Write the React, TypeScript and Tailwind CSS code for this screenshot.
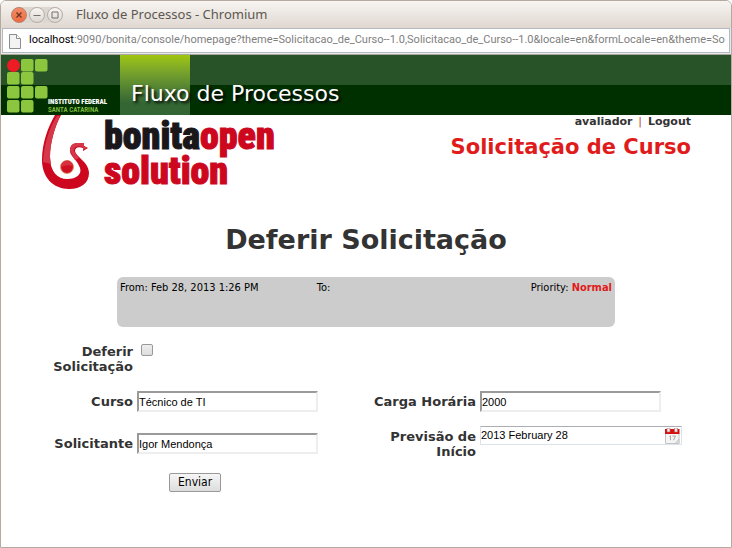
import { useState } from "react";
import type { ReactNode } from "react";

const URL_HOST = "localhost";
const URL_REST =
  ":9090/bonita/console/homepage?theme=Solicitacao_de_Curso--1.0,Solicitacao_de_Curso--1.0&locale=en&formLocale=en&theme=So";

function WindowButton({ label, close, children }: { label: string; close?: boolean; children: ReactNode }) {
  return (
    <button
      type="button"
      aria-label={label}
      className={
        close
          ? "h-4 w-4 rounded-full border border-[#b9806a] bg-gradient-to-b from-[#f58a66] to-[#ed6b40] text-[#6b3524]"
          : "h-4 w-4 rounded-full border border-[#b5aea6] bg-gradient-to-b from-[#f8f6f4] to-[#dcd7d1] text-[#77706a]"
      }
    >
      <svg viewBox="0 0 14 14" className="h-full w-full" fill="none" stroke="currentColor">
        {children}
      </svg>
    </button>
  );
}

function TitleBar() {
  return (
    <div className="flex h-[27px] items-center bg-gradient-to-b from-[#f7f5f2] to-[#e0d7d0] pl-[10px]">
      <div className="flex gap-[2px] rounded-full bg-[#ddd7d1]">
        <WindowButton label="Close" close>
          <path d="M4.5 4.5l5 5M9.5 4.5l-5 5" strokeWidth="1.3" />
        </WindowButton>
        <WindowButton label="Minimize">
          <path d="M3.5 7.5h7" />
        </WindowButton>
        <WindowButton label="Maximize">
          <path d="M4 4h6v6h-6z" />
        </WindowButton>
      </div>
      <h1 className="ml-[13px] text-[13px] text-[#5c5752]">Fluxo de Processos - Chromium</h1>
    </div>
  );
}

function AddressBar() {
  return (
    <div className="border-b border-[#a9a59f] bg-[#e9e9ea] px-px pb-px">
      <div className="flex h-[25px] items-center overflow-hidden border border-[#b4b8c2] bg-white pl-[6px] font-[Roboto,'Noto_Sans',sans-serif] text-[11px] whitespace-nowrap">
        <svg viewBox="0 0 12 16" className="mr-[8px] h-4 w-3 shrink-0">
          <path d="M.5 1.5h7l4 4v10H.5z" fill="#f3f3f3" stroke="#8c8c8c" />
          <path d="M7.5 1.5v4h4" fill="#fff" stroke="#8c8c8c" />
        </svg>
        <span className="text-black">{URL_HOST}</span>
        <span className="text-[#808080]">{URL_REST}</span>
      </div>
    </div>
  );
}

function InstituteLogo() {
  const tiles = [
    [14, 0],
    [28, 0],
    [0, 13],
    [14, 13],
    [0, 27],
    [14, 27],
    [28, 27],
    [0, 41],
    [14, 41],
  ];
  return (
    <svg viewBox="0 0 41 54" className="h-[54px] w-[41px] shrink-0">
      <circle cx="6.5" cy="6.5" r="6.5" fill="#ed1c24" />
      {tiles.map(([x, y]) => (
        <rect key={`${x}-${y}`} x={x} y={y} width="12.5" height="12.5" rx="2" fill="#8cc63f" />
      ))}
    </svg>
  );
}

function SiteHeader() {
  return (
    <header className="flex h-[60px] bg-[linear-gradient(#285228_50%,#003000_50%)]">
      <div className="flex w-[119px] shrink-0 pt-1 pl-[6px]">
        <InstituteLogo />
        <p className="mt-[39px] font-['Roboto_Condensed','Liberation_Sans',sans-serif] text-[7px] leading-[8px] font-black whitespace-nowrap text-white">
          INSTITUTO FEDERAL
          <br />
          <span className="font-medium text-[#8cc63f]">SANTA CATARINA</span>
        </p>
      </div>
      <div className="w-[70px] bg-gradient-to-b from-[#9fc60c] to-[#336633] to-80% pt-[25px] pl-[11px]">
        <h2 className="text-[22px] leading-[27px] whitespace-nowrap text-white [text-shadow:2px_2px_3px_#000]">
          Fluxo de Processos
        </h2>
      </div>
    </header>
  );
}

function BonitaLogo() {
  return (
    <div className="flex">
      <svg viewBox="0 0 50 75" className="h-[75px] w-[50px]">
        <path
          d="M14 0H20C14 11 9 28 9 42C9 57 17 64 26 64C36 64 41 59 39 53C37 46 29 41 29 36C29 30 32 28 37 28L43 28L43 31L47 33L42 36L42 33C37 31 34 33 34 36C35 42 48 47 48 58C48 68 40 74 28 74C12 74 1 62 1 45C1 28 7 12 14 0Z"
          fill="#cc071e"
        />
        <path
          d="M9 42C9 28 14 11 19 1H16C8 13 3 30 2 47L10 49ZM29 36C29 30 32 28 37 28L43 28L43 31L46 33L42 35L42 32C36 30 32 33 33 36L38 43L34 45Z"
          fill="#d6384a"
        />
        <circle cx="26" cy="52" r="6.5" fill="#cf1022" stroke="#e39a70" />
        <path d="M20 52a6 6 0 0 1 12-1q-6-2-12 1z" fill="#d93040" />
      </svg>
      <p className="ml-[13px] pt-[4px] font-['Roboto_Condensed','Liberation_Sans',sans-serif] text-[38px] leading-[35px] font-black text-[#cc071e] [-webkit-text-stroke:1px_currentColor]">
        <span className="text-[#1a171b]">bonita</span>open
        <br />
        solution
      </p>
    </div>
  );
}

function Field({ id, label, children }: { id: string; label: string; children: ReactNode }) {
  return (
    <div className="flex items-start gap-1">
      <label htmlFor={id} className="pt-[3px] text-right text-[13px] leading-[15px] font-bold text-[#333]">
        {label}
      </label>
      {children}
    </div>
  );
}

const fieldClass =
  "h-[21px] w-[181px] border-2 border-t-[#9a9a9a] border-l-[#9a9a9a] border-r-[#eee] border-b-[#eee] bg-white font-['Liberation_Sans',Arial,sans-serif] text-[11px] text-black";

function CalendarIcon() {
  return (
    <svg viewBox="0 0 15 16" className="h-4 w-[15px]">
      <path d="M.5 5h13.5v10.5H.5z" fill="#f4f4f4" stroke="#c5c5c5" />
      <path d="M0 1h14.5v5H0z" fill="#d80f0f" />
      <path d="M2 0h3v4H2zM9.5 0h3v4h-3z" fill="#eee" stroke="#a66" strokeWidth=".6" />
      <path d="M4.5 8.5l1-.8v4.5M7.500 8h3l-2 4.2" fill="none" stroke="#aaa" />
      <path d="M14 11l-4 4.5h4z" fill="#ddd" stroke="#bbb" strokeWidth=".6" />
    </svg>
  );
}

function RequestForm() {
  const [approved, setApproved] = useState(false);
  const [course, setCourse] = useState("Técnico de TI");
  const [hours, setHours] = useState("2000");
  const [applicant, setApplicant] = useState("Igor Mendonça");
  const [start, setStart] = useState("2013 February 28");

  return (
    <form className="mt-[14px]" onSubmit={(e) => e.preventDefault()}>
      <div className="grid grid-cols-2">
        <div className="flex flex-col [&_label]:w-[92px]">
          <div className="h-[50px]">
            <Field id="approved" label="Deferir Solicitação">
              <input
                id="approved"
                type="checkbox"
                checked={approved}
                onChange={(e) => setApproved(e.target.checked)}
                className="mt-[3px] ml-1 h-3 w-3 appearance-none rounded-xs border border-[#999] bg-gradient-to-b from-[#eee] to-[#ddd] checked:bg-[#666]"
              />
            </Field>
          </div>
          <div className="h-[42px]">
            <Field id="course" label="Curso">
              <input id="course" value={course} onChange={(e) => setCourse(e.target.value)} className={fieldClass} />
            </Field>
          </div>
          <Field id="applicant" label="Solicitante">
            <input id="applicant" value={applicant} onChange={(e) => setApplicant(e.target.value)} className={fieldClass} />
          </Field>
        </div>
        <div className="flex flex-col pt-[50px] [&_label]:w-[110px]">
          <div className="h-[35px]">
            <Field id="hours" label="Carga Horária">
              <input id="hours" value={hours} onChange={(e) => setHours(e.target.value)} className={fieldClass} />
            </Field>
          </div>
          <Field id="start" label="Previsão de Início">
            <div className="flex h-[19px] w-[202px] items-center border border-[#dde3ec] border-t-[#abadb3] pr-px">
              <input
                id="start"
                value={start}
                onChange={(e) => setStart(e.target.value)}
                className="min-w-0 flex-1 font-['Liberation_Sans',Arial,sans-serif] text-[11px] text-black"
              />
              <button type="button" aria-label="Calendar">
                <CalendarIcon />
              </button>
            </div>
          </Field>
        </div>
      </div>
      <button
        type="submit"
        className="mt-[14px] ml-32 h-[19px] rounded-xs border border-[#999] bg-gradient-to-b from-[#f6f6f6] to-[#ddd] px-2 font-['DejaVu_Sans_Condensed','DejaVu_Sans',sans-serif] text-[12px] leading-[17px] text-black"
      >
        Enviar
      </button>
    </form>
  );
}

export default function App() {
  return (
    <div className="flex min-h-screen flex-col overflow-hidden rounded-t-md border border-[#b5aaa0] bg-white font-['DejaVu_Sans',sans-serif]">
      <div className="font-['Noto_Sans','Open_Sans',sans-serif]">
        <TitleBar />
        <AddressBar />
      </div>
      <SiteHeader />
      <main className="px-10">
        <div className="flex justify-between">
          <BonitaLogo />
          <div className="text-right font-bold">
            <nav className="text-[11px] leading-[13px] text-[#333]">
              <a href="#perfil">avaliador</a> <span className="mx-[2px] font-normal text-[#a54a1c]">|</span>{" "}
              <a href="#logout">Logout</a>
            </nav>
            <h2 className="mt-[6px] text-[21px] leading-[26px] text-[#e01b1b]">Solicitação de Curso</h2>
          </div>
        </div>
        <h1 className="mt-[34px] text-center text-[27px] leading-[32px] font-bold text-[#333]">Deferir Solicitação</h1>
        <section className="mx-auto mt-[21px] grid h-[50px] w-[498px] max-w-full grid-cols-[2fr_2fr_1fr] rounded-md bg-[#ccc] px-[3px] pt-1 font-['DejaVu_Sans_Condensed','DejaVu_Sans',sans-serif] text-[11px] leading-[13px] whitespace-nowrap text-black">
          <span>From: Feb 28, 2013 1:26 PM</span>
          <span>To:</span>
          <span className="text-right">
            Priority: <b className="text-[#e01b1b]">Normal</b>
          </span>
        </section>
        <RequestForm />
      </main>
    </div>
  );
}
